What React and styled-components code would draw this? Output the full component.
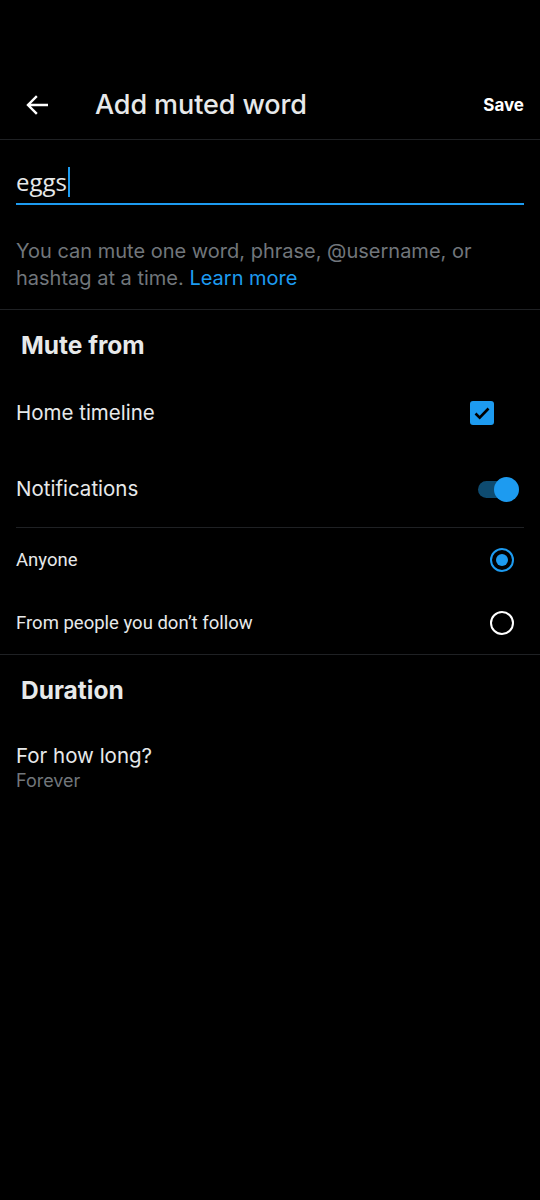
import React from "react"
import styled, { createGlobalStyle } from "styled-components"

const GlobalStyle = createGlobalStyle`
  html, body {
    margin: 0;
    padding: 0;
    background: #000;
  }
  body {
    font-family: Inter, "Noto Sans", sans-serif;
    color: #e7e9ea;
  }
`;

const BLUE = "#1d9bf0";
const GRAY = "#71767b";

export default function App() {
  return (
    <Page>
      <GlobalStyle />
      <StatusSpace />
      <Header>
        <BackButton aria-label="Back">
          <svg width="22" height="20" viewBox="0 0 22 20" fill="none">
            <path d="M21 10H2.5M10 2L2 10l8 8" stroke="#fff" strokeWidth="2.4" strokeLinecap="square" />
          </svg>
        </BackButton>
        <Title>Add muted word</Title>
        <SaveButton>Save</SaveButton>
      </Header>
      <Divider />

      <InputWrap>
        <InputText>eggs</InputText>
        <Caret />
      </InputWrap>
      <Helper>
        You can mute one word, phrase, @username, or hashtag at a time. <Link>Learn more</Link>
      </Helper>
      <Divider />

      <SectionTitle>Mute from</SectionTitle>
      <Row height={76}>
        <Label>Home timeline</Label>
        <Checkbox>
          <svg width="18" height="18" viewBox="0 0 18 18" fill="none">
            <path d="M2.5 9.5l4.2 4.2L15.5 4.5" stroke="#000" strokeWidth="2.6" strokeLinejoin="miter" />
          </svg>
        </Checkbox>
      </Row>
      <Row height={76}>
        <Label>Notifications</Label>
        <Toggle>
          <Thumb />
        </Toggle>
      </Row>
      <Divider inset />
      <Row height={63}>
        <SmallLabel>Anyone</SmallLabel>
        <Radio checked />
      </Row>
      <Row height={63}>
        <SmallLabel>From people you don’t follow</SmallLabel>
        <Radio />
      </Row>
      <Divider />

      <SectionTitle>Duration</SectionTitle>
      <Duration>
        <Label>For how long?</Label>
        <SubLabel>Forever</SubLabel>
      </Duration>
    </Page>
  )
}

const Page = styled.div`
  width: 540px;
  min-height: 1200px;
  background: #000;
`;
const StatusSpace = styled.div`
  height: 70px;
`;
const Header = styled.header`
  height: 69px;
  display: flex;
  align-items: center;
  padding: 0 16px 0 26px;
`;
const BackButton = styled.div`
  width: 22px;
  height: 20px;
  display: flex;
  align-items: center;
  margin-right: 47px;
`;
const Title = styled.h1`
  flex: 1;
  margin: 0;
  font-size: 27px;
  font-weight: 500;
  color: #e7e9ea;
  letter-spacing: -0.1px;
`;
const SaveButton = styled.span`
  font-size: 17px;
  font-weight: 700;
  color: #fff;
`;
const Divider = styled.div`
  height: 1px;
  background: #1f2124;
  margin: ${p => (p.inset ? "0 16px" : "0")};
`;
const InputWrap = styled.div`
  margin: 0 16px;
  padding: 28px 0 7px;
  height: 28px;
  display: flex;
  align-items: center;
  border-bottom: 2px solid ${BLUE};
  box-sizing: content-box;
`;
const InputText = styled.span`
  font-family: "Open Sans", sans-serif;
  font-size: 24px;
  line-height: 28px;
  color: #e7e9ea;
`;
const Caret = styled.span`
  width: 2px;
  height: 30px;
  background: ${BLUE};
  margin-left: 1px;
`;
const Helper = styled.p`
  margin: 0;
  padding: 33px 16px 17px;
  font-size: 20px;
  line-height: 27px;
  color: ${GRAY};
`;
const Link = styled.span`
  color: ${BLUE};
`;
const SectionTitle = styled.h2`
  margin: 0;
  padding: 20px 21px 15px;
  font-size: 24.5px;
  line-height: 30px;
  font-weight: 700;
  color: #e7e9ea;
`;
const Row = styled.div`
  height: ${p => p.height}px;
  display: flex;
  align-items: center;
  justify-content: space-between;
  padding: 0 16px;
`;
const Label = styled.span`
  font-size: 20.5px;
  line-height: 26px;
  color: #e7e9ea;
`;
const SmallLabel = styled.span`
  font-family: Roboto, sans-serif;
  font-size: 18.5px;
  color: #e7e9ea;
`;
const Checkbox = styled.span`
  width: 24px;
  height: 24px;
  border-radius: 3px;
  background: ${BLUE};
  display: flex;
  align-items: center;
  justify-content: center;
  margin-right: 30px;
`;
const Toggle = styled.span`
  position: relative;
  width: 36px;
  height: 17px;
  border-radius: 9px;
  background: #0e4b70;
  margin-right: 10px;
`;
const Thumb = styled.span`
  position: absolute;
  right: -5px;
  top: 50%;
  width: 25px;
  height: 25px;
  margin-top: -12.5px;
  border-radius: 50%;
  background: ${BLUE};
`;
const Radio = styled.span`
  width: 24px;
  height: 24px;
  box-sizing: border-box;
  border-radius: 50%;
  border: 2.5px solid ${p => (p.checked ? BLUE : "#fff")};
  display: flex;
  align-items: center;
  justify-content: center;
  margin-right: 10px;
  &::after {
    content: "";
    display: ${p => (p.checked ? "block" : "none")};
    width: 12px;
    height: 12px;
    border-radius: 50%;
    background: ${BLUE};
  }
`;
const Duration = styled.div`
  padding: 23px 16px 0;
  display: flex;
  flex-direction: column;
`;
const SubLabel = styled.span`
  font-size: 18px;
  line-height: 24px;
  color: ${GRAY};
`;
